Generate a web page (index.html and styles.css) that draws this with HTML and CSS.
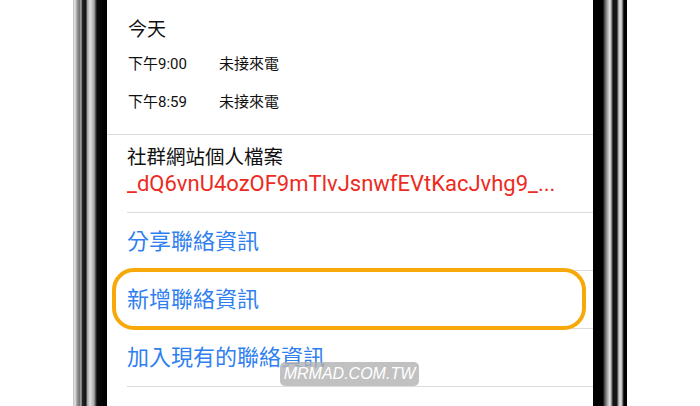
FILE: index.html
```html
<!DOCTYPE html>
<html lang="zh-Hant">
<head>
<meta charset="utf-8">
<link rel="stylesheet" href="styles.css">
</head>
<body>
<div class="page">
  <div class="bezel bezel-left"></div>
  <div class="screen">
    <section class="calls">
      <div class="day">今天</div>
      <div class="call"><span class="time">下午9:00</span><span class="type">未接來電</span></div>
      <div class="call"><span class="time">下午8:59</span><span class="type">未接來電</span></div>
    </section>
    <section class="social">
      <div class="label">社群網站個人檔案</div>
      <div class="link">_dQ6vnU4ozOF9mTlvJsnwfEVtKacJvhg9_...</div>
    </section>
    <div class="actions">
      <div class="action">分享聯絡資訊</div>
      <div class="action highlighted">新增聯絡資訊<span class="ring"></span></div>
      <div class="action">加入現有的聯絡資訊</div>
    </div>
  </div>
  <div class="bezel bezel-right"></div>
  <div class="watermark">MRMAD.COM.TW</div>
</div>
</body>
</html>
```
FILE: styles.css
```css
html, body {
  margin: 0;
  padding: 0;
  background: #ffffff;
}
body {
  font-family: "Roboto", "Noto Sans CJK TC", sans-serif;
  color: #111;
}
.page {
  position: relative;
  width: 700px;
  height: 406px;
  overflow: hidden;
  display: flex;
  justify-content: center;
}
.bezel {
  width: 34px;
  height: 406px;
  flex: none;
}
.bezel-left {
  background: linear-gradient(to right,
    #bdbdbd 0px, #e6e6e6 2px, #9a9a9a 4px, #6a6a6a 7px, #cfcfcf 8px,
    #2a2a2a 9px, #111 13px, #9b9b9b 14px, #e0e0e0 17px, #a8a8a8 21px,
    #3a3a3a 23px, #0a0a0a 24px, #000 34px);
}
.bezel-right {
  background: linear-gradient(to right,
    #000 0px, #000 10px, #3a3a3a 11px, #9a9a9a 14px, #e8e8e8 17px,
    #6a6a6a 19px, #111 20px, #151515 24px, #8a8a8a 25px, #e3e3e3 27px,
    #b5b5b5 29px, #444 30px, #000 31px, #000 34px);
}
.screen {
  width: 486px;
  flex: none;
  background: #fff;
  display: flex;
  flex-direction: column;
}
.calls {
  padding: 17px 0 0 21px;
  height: 135px;
  box-sizing: border-box;
  border-bottom: 1px solid #dcdcdc;
}
.day {
  font-size: 19px;
  line-height: 26px;
  height: 26px;
  margin-bottom: 11px;
}
.call {
  display: flex;
  font-size: 15px;
  line-height: 20px;
  height: 20px;
  margin-bottom: 18px;
}
.time {
  width: 91px;
}
.social {
  padding: 10px 0 0 20px;
  height: 77px;
  box-sizing: border-box;
}
.label {
  font-size: 19.5px;
  line-height: 26px;
}
.link {
  font-size: 22px;
  line-height: 26px;
  color: #ec2b22;
  white-space: nowrap;
}
.actions {
  margin-left: 20px;
  border-top: 1px solid #dcdcdc;
}
.action {
  position: relative;
  height: 57px;
  line-height: 57px;
  font-size: 22px;
  color: #2f7ff0;
  border-bottom: 1px solid #dcdcdc;
}
.ring {
  position: absolute;
  left: -15px;
  right: 7px;
  top: -3px;
  height: 62px;
  box-sizing: border-box;
  border: 4px solid #f7a90a;
  border-radius: 22px;
}
.watermark {
  position: absolute;
  left: 280px;
  top: 362px;
  width: 139px;
  height: 24px;
  border-radius: 5px;
  background: rgba(178, 178, 178, 0.8);
  color: #fff;
  font-family: "Liberation Sans", sans-serif;
  font-style: italic;
  font-size: 16px;
  line-height: 24px;
  text-align: center;
}
```
